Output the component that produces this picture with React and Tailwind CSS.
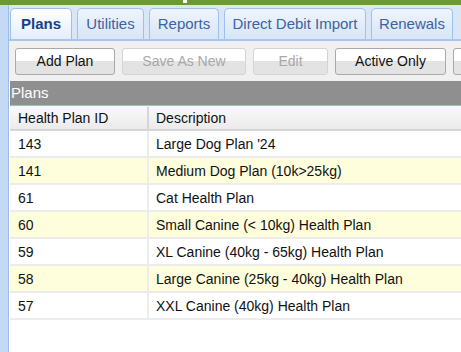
const TABS = ['Plans', 'Utilities', 'Reports', 'Direct Debit Import', 'Renewals'];

const PLANS = [
  { id: '143', description: "Large Dog Plan '24" },
  { id: '141', description: 'Medium Dog Plan (10k>25kg)' },
  { id: '61', description: 'Cat Health Plan' },
  { id: '60', description: 'Small Canine (< 10kg) Health Plan' },
  { id: '59', description: 'XL Canine (40kg - 65kg) Health Plan' },
  { id: '58', description: 'Large Canine (25kg - 40kg) Health Plan' },
  { id: '57', description: 'XXL Canine (40kg) Health Plan' }
];

function ToolButton({ label, width, disabled }) {
  return (
    <button
      disabled={disabled}
      className={`h-[27px] shrink-0 rounded-[3px] border bg-gradient-to-b from-white from-50% to-[#e3e3e3] to-50% text-[14px] ${
        disabled ? 'border-[#d4d4d4] text-[#a8a8a8]' : 'border-[#a9a9a9] text-[#111]'
      } ${width}`}
    >
      {label}
    </button>
  );
}

function App() {
  return (
    <div className="w-[461px] h-[352px] overflow-hidden flex flex-col bg-white font-['Liberation_Sans',Arial,sans-serif]">
      <div className="h-[5px] shrink-0 bg-[#6b9a35] relative">
        <div className="absolute left-[183px] top-0 w-[4px] h-[3px] bg-white" />
      </div>
      <div className="flex flex-1 min-h-0">
        <div className="w-[9px] shrink-0 bg-[#c4daf4] border-r border-[#9dbde8]" />
        <div className="flex-1 min-w-0 flex flex-col">
          <div className="h-[36px] shrink-0 flex items-end gap-[5px] pl-[1px] bg-[#d9e6f6] border-b-2 border-[#a9c6ec] overflow-hidden">
            {TABS.map((tab, i) => (
              <div
                key={tab}
                className={`h-[31px] shrink-0 flex items-center rounded-t-[5px] border border-b-0 border-[#9fc0ea] text-[15px] ${
                  i === 0
                    ? 'w-[62px] justify-center bg-gradient-to-b from-white to-[#e4eefb] font-bold text-[#15428b]'
                    : 'bg-gradient-to-b from-[#eef4fc] to-[#d7e5f7] text-[#3d63a0] justify-center'
                } ${['', 'w-[67px]', 'w-[70px]', 'w-[142px]', 'w-[82px]'][i]}`}
              >
                {tab}
              </div>
            ))}
          </div>
          <div className="h-[40px] shrink-0 flex items-center gap-[7px] pl-[6px] bg-[#f0f0f0] overflow-hidden">
            <ToolButton label="Add Plan" width="w-[100px]" />
            <ToolButton label="Save As New" width="w-[124px]" disabled />
            <ToolButton label="Edit" width="w-[75px]" disabled />
            <ToolButton label="Active Only" width="w-[111px]" />
            <ToolButton label="" width="w-[40px]" />
          </div>
          <div className="flex-1 min-h-0 pl-[1px] bg-white">
            <div className="h-[24px] flex items-center pl-[1px] bg-[#8f8f8f] text-white text-[15px]">Plans</div>
            <div className="h-[2px] bg-[#f4f7fb] border-t border-[#9dbde0]" />
            <div className="h-[24px] flex bg-gradient-to-b from-[#f9f9f9] to-[#ebebeb] border-b-2 border-[#d6d6d6] text-[14px] text-[#111]">
              <div className="w-[139px] pl-[8px] flex items-center border-r-2 border-[#d6d6d6]">Health Plan ID</div>
              <div className="flex-1 pl-[7px] flex items-center">Description</div>
            </div>
            {PLANS.map((plan, i) => (
              <div
                key={plan.id}
                className={`h-[27px] flex text-[14px] text-[#111] border-b-2 border-[#ececec] ${
                  i % 2 === 1 ? 'bg-[#fefedd]' : 'bg-white'
                }`}
              >
                <div className="w-[139px] pl-[8px] pt-[1px] flex items-center border-r-2 border-[#ececec]">{plan.id}</div>
                <div className="flex-1 pl-[7px] pt-[1px] flex items-center whitespace-nowrap">{plan.description}</div>
              </div>
            ))}
          </div>
        </div>
      </div>
    </div>
  );
}

export default App;
